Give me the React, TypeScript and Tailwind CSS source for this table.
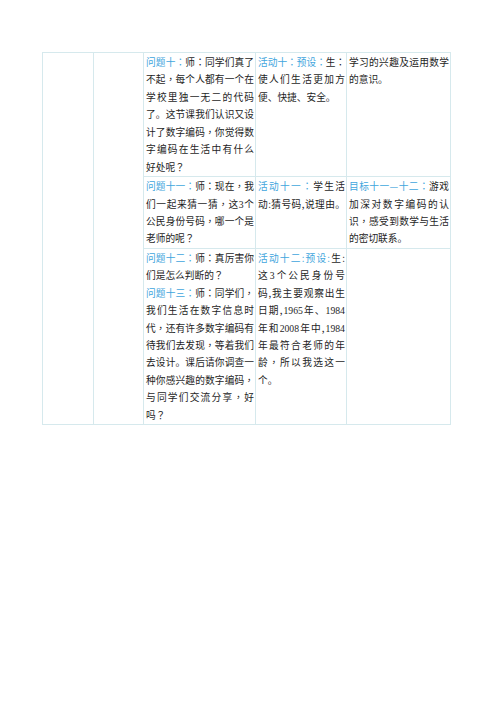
import React from "react";

type Seg = [string, string?];
type Ln = { j: boolean; segs: Seg[] };

const mk = (j: boolean, segs: (string | Seg)[]): Ln => ({
  j,
  segs: segs.map((s) => (typeof s === "string" ? ([s] as Seg) : s)),
});
const J = (...segs: (string | Seg)[]) => mk(true, segs);
const L = (...segs: (string | Seg)[]) => mk(false, segs);

const colorCls = (st?: string) => (st === "b" ? "text-[#3fa6dd]" : "");
const punct = "，：？";

function Line({ ln }: { ln: Ln }) {
  const tokens: React.ReactNode[] = [];
  let k = 0;
  ln.segs.forEach(([t, st]) => {
    if (st === "s") {
      tokens.push(
        <span key={k++} className="font-['Liberation_Serif',serif]">
          {ln.j ? t.trim() : t}
        </span>
      );
    } else if (ln.j) {
      for (const ch of t) {
        if (ch === " ") continue;
        const p = punct.includes(ch) ? " font-['Noto_Sans_CJK_TC',sans-serif]" : "";
        tokens.push(
          <span key={k++} className={colorCls(st) + p}>
            {ch}
          </span>
        );
      }
    } else {
      for (const ch of t) {
        const p = punct.includes(ch) ? " font-['Noto_Sans_CJK_TC',sans-serif]" : "";
        tokens.push(
          <span key={k++} className={colorCls(st) + p}>
            {ch}
          </span>
        );
      }
    }
  });
  if (ln.j) {
    return <div className="flex justify-between whitespace-nowrap h-[17.45px]">{tokens}</div>;
  }
  return <div className="whitespace-nowrap h-[17.45px]">{tokens}</div>;
}

function Cell({ lines, rowSpan }: { lines?: Ln[]; rowSpan?: number }) {
  return (
    <td rowSpan={rowSpan} className="border border-[#d6e9ed] align-top pt-[1px] pl-[2px] pr-[1px] pb-0">
      {lines?.map((ln, i) => (
        <Line key={i} ln={ln} />
      ))}
    </td>
  );
}

const r1c3 = [
  J(["问题十：", "b"], "师：同学们真了"),
  J("不起，每个人都有一个在"),
  J("学校里独一无二的代码"),
  J("了。这节课我们认识又设"),
  J("计了数字编码，你觉得数"),
  J("字编码在生活中有什么"),
  L("好处呢？"),
];
const r1c4 = [J(["活动十：预设：", "b"], "生："), J("使人们生活更加方"), L("便、快捷、安全。")];
const r1c5 = [J("学习的兴趣及运用数学"), L("的意识。")];

const r2c3 = [
  J(["问题十一：", "b"], "师：现在，我"),
  J("们一起来猜一猜，这", ["3", "s"], "个"),
  J("公民身份号码，哪一个是"),
  L("老师的呢？"),
];
const r2c4 = [J(["活动十一：", "b"], "学生活"), J("动:猜号码,说理由。")];
const r2c5 = [
  J(["目标十一—十二：", "b"], "游戏"),
  J("加深对数字编码的认"),
  J("识，感受到数学与生活"),
  L("的密切联系。"),
];

const r3c3 = [
  J(["问题十二：", "b"], "师：真厉害你"),
  L("们是怎么判断的？"),
  J(["问题十三：", "b"], "师：同学们，"),
  J("我们生活在数字信息时"),
  J("代，还有许多数字编码有"),
  J("待我们去发现，等着我们"),
  J("去设计。课后请你调查一"),
  J("种你感兴趣的数字编码，"),
  J("与同学们交流分享，好"),
  L("吗？"),
];
const r3c4 = [
  J(["活动十二:预设:", "b"], "生:"),
  J("这", ["3", "s"], "个公民身份号"),
  J("码,我主要观察出生"),
  J("日期,", ["1965", "s"], "年、", ["1984", "s"]),
  J("年和", ["2008", "s"], "年中,", ["1984", "s"]),
  J("年最符合老师的年"),
  J("龄，所以我选这一"),
  L("个。"),
];

export default function App() {
  return (
    <div className="w-[500px] h-[707px] bg-white pt-[52px] pl-[42px] font-['Noto_Sans_CJK_SC',sans-serif] text-[9.7px] leading-[17.45px] text-[#1e1e1e]">
      <table className="table-fixed border-collapse w-[408px]">
        <colgroup>
          <col className="w-[51px]" />
          <col className="w-[50px]" />
          <col className="w-[112px]" />
          <col className="w-[91px]" />
          <col className="w-[104px]" />
        </colgroup>
        <tbody>
          <tr>
            <Cell rowSpan={3} />
            <Cell rowSpan={3} />
            <Cell lines={r1c3} />
            <Cell lines={r1c4} />
            <Cell lines={r1c5} />
          </tr>
          <tr>
            <Cell lines={r2c3} />
            <Cell lines={r2c4} />
            <Cell lines={r2c5} />
          </tr>
          <tr>
            <Cell lines={r3c3} />
            <Cell lines={r3c4} />
            <Cell />
          </tr>
        </tbody>
      </table>
    </div>
  );
}
